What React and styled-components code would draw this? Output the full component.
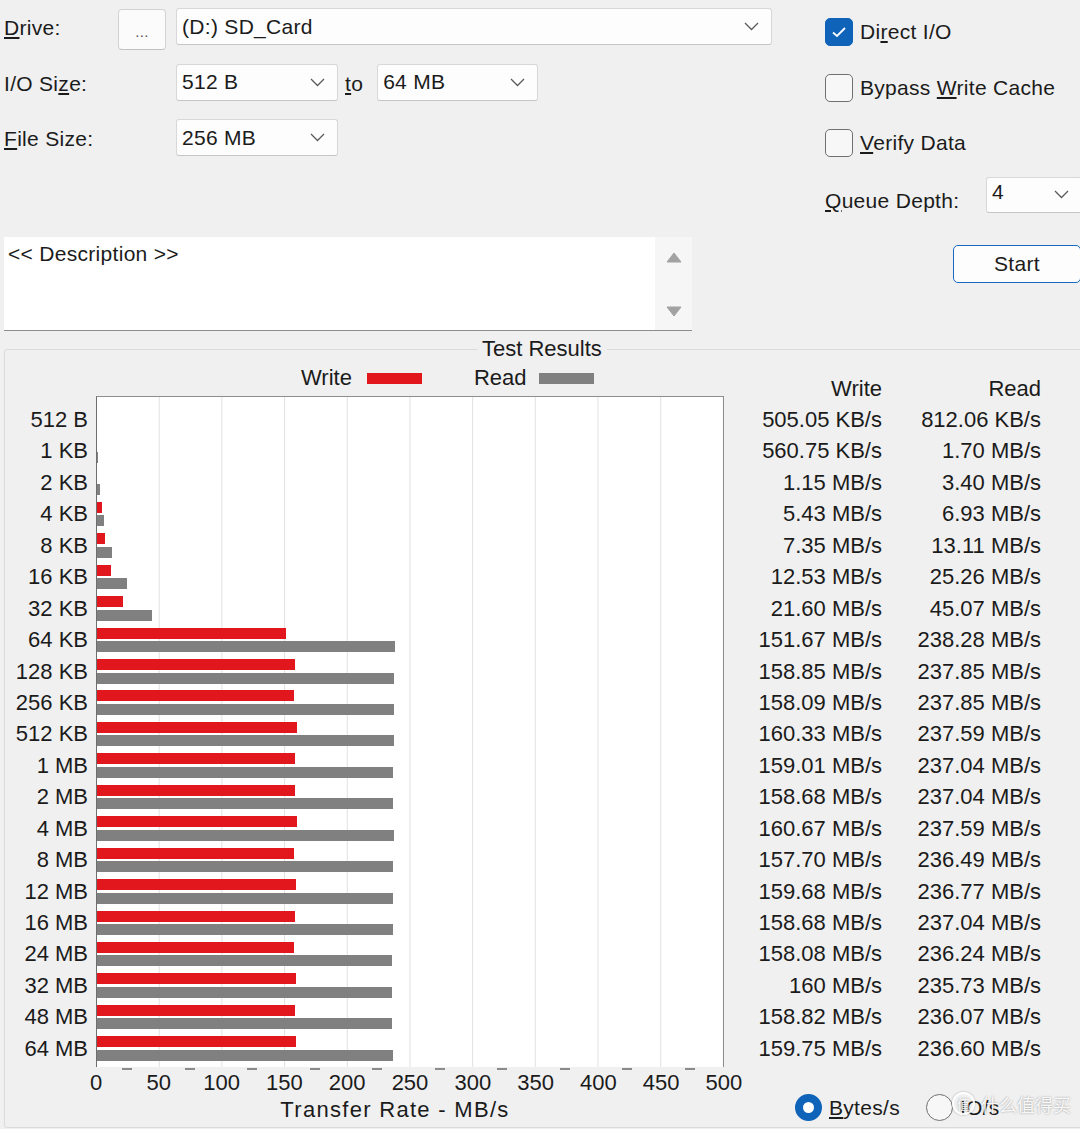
import React from 'react'
import styled, { createGlobalStyle } from 'styled-components'

const SCALE = 1.256 // px per MB/s

const rows = [
  ['512 B', 0.49, 0.79, '505.05 KB/s', '812.06 KB/s'],
  ['1 KB', 0.55, 1.7, '560.75 KB/s', '1.70 MB/s'],
  ['2 KB', 1.15, 3.4, '1.15 MB/s', '3.40 MB/s'],
  ['4 KB', 5.43, 6.93, '5.43 MB/s', '6.93 MB/s'],
  ['8 KB', 7.35, 13.11, '7.35 MB/s', '13.11 MB/s'],
  ['16 KB', 12.53, 25.26, '12.53 MB/s', '25.26 MB/s'],
  ['32 KB', 21.6, 45.07, '21.60 MB/s', '45.07 MB/s'],
  ['64 KB', 151.67, 238.28, '151.67 MB/s', '238.28 MB/s'],
  ['128 KB', 158.85, 237.85, '158.85 MB/s', '237.85 MB/s'],
  ['256 KB', 158.09, 237.85, '158.09 MB/s', '237.85 MB/s'],
  ['512 KB', 160.33, 237.59, '160.33 MB/s', '237.59 MB/s'],
  ['1 MB', 159.01, 237.04, '159.01 MB/s', '237.04 MB/s'],
  ['2 MB', 158.68, 237.04, '158.68 MB/s', '237.04 MB/s'],
  ['4 MB', 160.67, 237.59, '160.67 MB/s', '237.59 MB/s'],
  ['8 MB', 157.7, 236.49, '157.70 MB/s', '236.49 MB/s'],
  ['12 MB', 159.68, 236.77, '159.68 MB/s', '236.77 MB/s'],
  ['16 MB', 158.68, 237.04, '158.68 MB/s', '237.04 MB/s'],
  ['24 MB', 158.08, 236.24, '158.08 MB/s', '236.24 MB/s'],
  ['32 MB', 160, 235.73, '160 MB/s', '235.73 MB/s'],
  ['48 MB', 158.82, 236.07, '158.82 MB/s', '236.07 MB/s'],
  ['64 MB', 159.75, 236.6, '159.75 MB/s', '236.60 MB/s'],
]

const ticks = [0, 50, 100, 150, 200, 250, 300, 350, 400, 450, 500]

const GlobalStyle = createGlobalStyle`
  html, body { margin: 0; padding: 0; background: #f0f0f0; }
  body { font-family: "Liberation Sans", Arial, sans-serif; color: #1b1b1b; }
  * { box-sizing: border-box; }
`

const Page = styled.div`
  width: 1080px;
  height: 1129px;
  overflow: hidden;
  background: #f0f0f0;
  position: relative;
`

const Top = styled.div`
  display: flex;
  height: 331px;
  font-size: 21px;
  letter-spacing: 0.3px;
`

const LeftPane = styled.div`
  width: 825px;
  flex-shrink: 0;
  padding-top: 8px;
`

const FieldRow = styled.div`
  display: flex;
  align-items: flex-start;
  height: 55.5px;
  padding-left: 4px;
`

const Label = styled.span`
  width: ${p => p.$w}px;
  flex-shrink: 0;
  line-height: 40px;
  white-space: nowrap;
`

const To = styled.span`
  line-height: 40px;
  margin: 0 14px 0 7px;
`

const DotsButton = styled.div`
  width: 48px;
  height: 41px;
  margin: 1px 10px 0 0;
  border: 1px solid #d2d2d2;
  border-bottom-color: #c2c2c2;
  border-radius: 4px;
  background: #fbfbfb;
  color: #555;
  font-size: 15px;
  text-align: center;
  line-height: 44px;
`

const ComboBox = styled.div`
  width: ${p => p.$w}px;
  height: ${p => p.$h || 37}px;
  flex-shrink: 0;
  display: flex;
  align-items: center;
  justify-content: space-between;
  padding: 0 12px 0 5px;
  background: #fdfdfd;
  border: 1px solid #d8d8d8;
  border-bottom-color: #c6c6c6;
  border-radius: 3px;
`

const ComboText = styled.span`
  margin-top: ${p => p.$up ? -6 : 0}px;
`

const Chevron = () => (
  <svg width="15" height="9" viewBox="0 0 15 9">
    <polyline points="1,1 7.5,7.5 14,1" fill="none" stroke="#5a5a5a" strokeWidth="1.3" />
  </svg>
)

const Combo = ({ w, h, up, children }) => (
  <ComboBox $w={w} $h={h}>
    <ComboText $up={up}>{children}</ComboText>
    <Chevron />
  </ComboBox>
)

const Description = styled.div`
  margin: 62px 0 0 4px;
  width: 688px;
  height: 94px;
  display: flex;
  background: #fff;
  border-bottom: 1px solid #8c8c8c;
`

const DescText = styled.div`
  flex: 1;
  padding: 4px 4px;
  line-height: 26px;
`

const ScrollBar = styled.div`
  width: 37px;
  background: #f6f6f6;
  display: flex;
  flex-direction: column;
  justify-content: space-between;
  align-items: center;
  padding: 15px 0 13px;
`

const Arrow = ({ down }) => (
  <svg width="16" height="11" viewBox="0 0 16 11">
    <polygon points={down ? '1,1 15,1 8,10' : '8,1 15,10 1,10'} fill="#a2a2a2" stroke="#a2a2a2" strokeLinejoin="round" />
  </svg>
)

const RightPane = styled.div`
  flex: 1;
  padding-top: 18px;
  display: flex;
  flex-direction: column;
`

const Checks = styled.div`
  display: flex;
  flex-direction: column;
  gap: 27.5px;
`

const CheckRow = styled.div`
  display: flex;
  align-items: center;
  height: 28px;
  white-space: nowrap;
`

const Box = styled.span`
  width: 28px;
  height: 28px;
  margin-right: 7px;
  border-radius: 5px;
  display: flex;
  align-items: center;
  justify-content: center;
  background: ${p => p.$on ? '#0f63b8' : '#f7f7f7'};
  border: 1.5px solid ${p => p.$on ? '#0f63b8' : '#707070'};
`

const Check = ({ on, children }) => (
  <CheckRow>
    <Box $on={on}>
      {on && (
        <svg width="18" height="14" viewBox="0 0 18 14">
          <polyline points="3,7.5 7,11 15,3" fill="none" stroke="#fff" strokeWidth="1.8" />
        </svg>
      )}
    </Box>
    <span>{children}</span>
  </CheckRow>
)

const QueueRow = styled.div`
  display: flex;
  align-items: flex-start;
  margin-top: 19.5px;
`

const QueueLabel = styled.span`
  width: 161px;
  flex-shrink: 0;
  line-height: 24px;
  margin-top: 12px;
  white-space: nowrap;
`

const StartButton = styled.div`
  width: 128px;
  height: 38px;
  margin: 32px 0 0 128px;
  border: 1.5px solid #1769c4;
  border-radius: 5px;
  background: #fdfdfd;
  line-height: 35px;
  text-align: center;
`

const GroupBox = styled.fieldset`
  margin: 5px 0 0 4px;
  width: 1090px;
  padding: 0;
  border: 1px solid #dadada;
  border-radius: 3px;
  min-width: 0;
  height: 792px;
`

const GroupTitle = styled.legend`
  margin-left: 472px;
  padding: 0 5px;
  font-size: 22px;
  line-height: 26px;
`

const Chart = styled.div`
  display: grid;
  grid-template-columns: 91px 628px 1fr;
  grid-template-rows: 30px auto auto;
  padding-top: 4px;
  font-size: 22px;
`

const Legend = styled.div`
  grid-column: 2;
  grid-row: 1;
  display: flex;
  align-items: center;
  height: 24px;
  padding-left: 205px;
`

const Swatch = styled.span`
  width: 55px;
  height: 11px;
  margin: 0 ${p => p.$gap}px 0 ${p => p.$pre}px;
  background: ${p => p.$c};
`

const YLabels = styled.div`
  grid-column: 1;
  grid-row: 2;
  padding: 8px 8px 0 0;
  text-align: right;
`

const Cell = styled.div`
  height: 31.45px;
  line-height: 31.45px;
  white-space: nowrap;
`

const Plot = styled.div`
  grid-column: 2;
  grid-row: 2;
  height: 671px;
  padding-top: 8px;
  background-color: #fff;
  background-image: linear-gradient(to right, transparent calc(100% - 1px), #e1e1e1 calc(100% - 1px));
  background-size: 62.7px 100%;
  border-left: 1px solid #6e6e6e;
  border-top: 1.5px solid #8e8e8e;
  border-right: 1.5px solid #8e8e8e;
`

const BarRow = styled.div`
  height: 31.45px;
  padding-top: 2.5px;
  display: flex;
  flex-direction: column;
  gap: 2.5px;
`

const Bar = styled.div`
  height: 11px;
  background: ${p => p.$c};
`

const Values = styled.div`
  grid-column: 3;
  grid-row: 1 / 3;
  display: grid;
  grid-template-columns: 158px 159px;
  grid-template-rows: 38px;
  grid-auto-rows: 31.45px;
  text-align: right;
`

const ValueHead = styled.div`
  line-height: 31px;
  padding-top: 7px;
`

const Units = styled.div`
  grid-column: 3;
  grid-row: 3;
  display: flex;
  align-items: center;
  padding: 25px 0 0 71px;
  font-size: 21px;
  letter-spacing: 0.3px;
  white-space: nowrap;
`

const XAxis = styled.div`
  grid-column: 2;
  grid-row: 3;
  display: flex;
  flex-direction: column;
`

const MinorTicks = styled.div`
  display: flex;
  height: 4px;
  padding-left: 26px;
  gap: 52.5px;
`

const Dash = styled.span`
  width: 10px;
  height: 2px;
  margin-top: 1px;
  background: #8a8a8a;
`

const TickLabels = styled.div`
  display: flex;
  margin-left: -31.4px;
  height: 24px;
`

const Tick = styled.span`
  width: 62.8px;
  flex-shrink: 0;
  text-align: center;
  line-height: 24px;
`

const AxisTitle = styled.div`
  padding: 2px 30px 0 0;
  text-align: center;
  line-height: 26px;
  letter-spacing: 1.3px;
`

const RadioCircle = styled.span`
  width: 27px;
  height: 27px;
  border-radius: 50%;
  margin-right: 7px;
  flex-shrink: 0;
  background: ${p => p.$on ? '#fff' : '#f7f7f7'};
  border: ${p => p.$on ? '8.5px solid #0f63b8' : '1.5px solid #707070'};
`

const RadioItem = styled.span`
  display: flex;
  align-items: center;
  margin-right: 26px;
`

const Watermark = styled.div`
  position: absolute;
  left: 952px;
  top: 1092px;
  display: flex;
  align-items: center;
  gap: 6px;
  color: rgba(255, 255, 255, 0.93);
  text-shadow: 0 0 2px rgba(0, 0, 0, 0.4);
  font-family: "Noto Sans CJK SC", sans-serif;
  font-size: 18px;
  line-height: 22px;
`

const MarkCircle = styled.span`
  width: 23px;
  height: 23px;
  border-radius: 50%;
  border: 2px solid rgba(255, 255, 255, 0.93);
  box-shadow: 0 0 2px rgba(0, 0, 0, 0.35);
  display: flex;
  align-items: center;
  justify-content: center;
  font-size: 13px;
`

const barWidth = v => Math.max(0, v * SCALE - 1.5)

export default function App() {
  return (
    <Page>
      <GlobalStyle />
      <Top>
        <LeftPane>
          <FieldRow>
            <Label $w={114}><u>D</u>rive:</Label>
            <DotsButton>...</DotsButton>
            <Combo w={596}>(D:) SD_Card</Combo>
          </FieldRow>
          <FieldRow>
            <Label $w={172}>I/O Si<u>z</u>e:</Label>
            <Combo w={162}>512 B</Combo>
            <To><u>t</u>o</To>
            <Combo w={161}>64 MB</Combo>
          </FieldRow>
          <FieldRow>
            <Label $w={172}><u>F</u>ile Size:</Label>
            <Combo w={162}>256 MB</Combo>
          </FieldRow>
          <Description>
            <DescText>&lt;&lt; Description &gt;&gt;</DescText>
            <ScrollBar>
              <Arrow />
              <Arrow down />
            </ScrollBar>
          </Description>
        </LeftPane>
        <RightPane>
          <Checks>
            <Check on>Di<u>r</u>ect I/O</Check>
            <Check>Bypass <u>W</u>rite Cache</Check>
            <Check><u>V</u>erify Data</Check>
          </Checks>
          <QueueRow>
            <QueueLabel><u>Q</u>ueue Depth:</QueueLabel>
            <Combo w={96} h={36} up>4</Combo>
          </QueueRow>
          <StartButton>Start</StartButton>
        </RightPane>
      </Top>

      <GroupBox>
        <GroupTitle>Test Results</GroupTitle>
        <Chart>
          <Legend>
            Write<Swatch $c="#e2171d" $pre={15} $gap={52} />
            Read<Swatch $c="#808080" $pre={12} $gap={0} />
          </Legend>

          <YLabels>
            {rows.map(r => <Cell key={r[0]}>{r[0]}</Cell>)}
          </YLabels>

          <Plot>
            {rows.map(r => (
              <BarRow key={r[0]}>
                <Bar $c="#e2171d" style={{ width: barWidth(r[1]) }} />
                <Bar $c="#808080" style={{ width: barWidth(r[2]) }} />
              </BarRow>
            ))}
          </Plot>

          <Values>
            <ValueHead>Write</ValueHead>
            <ValueHead>Read</ValueHead>
            {rows.map(r => (
              <React.Fragment key={r[0]}>
                <Cell>{r[3]}</Cell>
                <Cell>{r[4]}</Cell>
              </React.Fragment>
            ))}
          </Values>

          <XAxis>
            <MinorTicks>
              {ticks.slice(1).map(t => <Dash key={t} />)}
            </MinorTicks>
            <TickLabels>
              {ticks.map(t => <Tick key={t}>{t}</Tick>)}
            </TickLabels>
            <AxisTitle>Transfer Rate - MB/s</AxisTitle>
          </XAxis>

          <Units>
            <RadioItem><RadioCircle $on /><span><u>B</u>ytes/s</span></RadioItem>
            <RadioItem><RadioCircle /><span>IO/s</span></RadioItem>
          </Units>
        </Chart>
      </GroupBox>

      <Watermark>
        <MarkCircle>值</MarkCircle>
        什么值得买
      </Watermark>
    </Page>
  )
}
